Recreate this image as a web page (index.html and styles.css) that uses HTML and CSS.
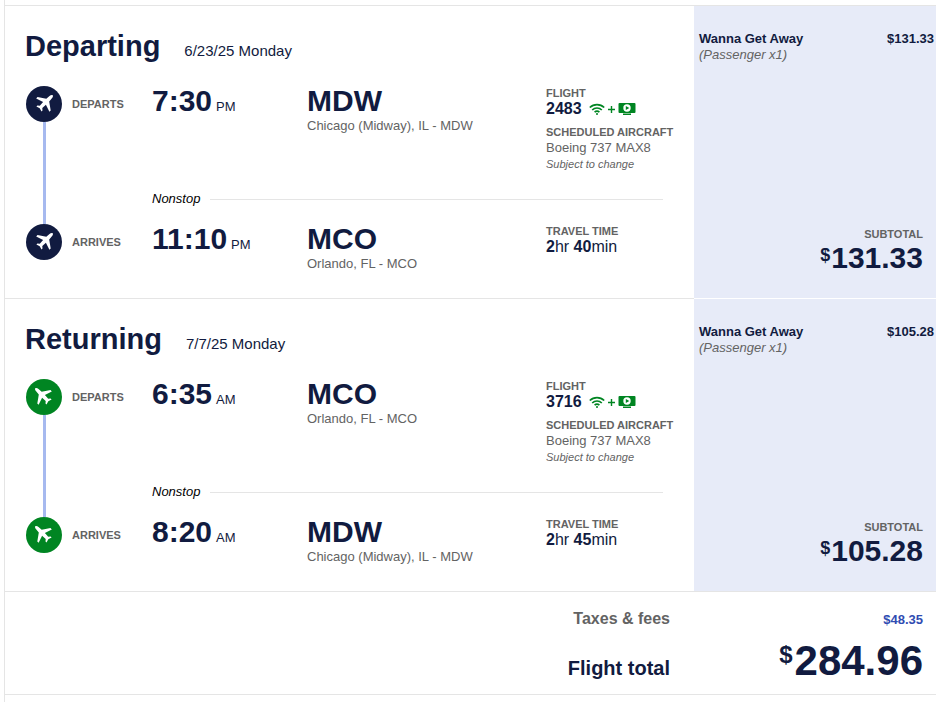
FILE: index.html
```html
<!DOCTYPE html>
<html lang="en">
<head>
<meta charset="utf-8">
<title>Flight price summary</title>
<meta name="viewport" content="width=device-width, initial-scale=1">
<link rel="stylesheet" href="styles.css">
</head>
<body>
<svg class="sprite" aria-hidden="true">
  <symbol id="plane" viewBox="0 0 36 36">
    <path d="M26.700 9.300c-.8-.6-2.200-.1-3.200.8l-3.200 2.700-8.800-1.700-1.300 1.300 6.900 3.700-3.300 3.700-2.400-.2-1 1 3.300 1.700 1.800 3.300 1-1-.2-2.500 3.600-3.400 3.500 7 1.300-1.300-1.500-8.900 2.700-3.200c.9-1 1.400-2.300.8-3z"/>
  </symbol>
  <symbol id="wifi" viewBox="0 0 16 12">
    <g fill="none" stroke="currentColor" stroke-width="1.700">
      <path d="M.8 4.500a10.300 10.300 0 0 1 14.400 0"/>
      <path d="M3.200 7a6.800 6.800 0 0 1 9.600 0"/>
      <path d="M5.600 9.200a3.500 3.500 0 0 1 4.800 0"/>
    </g>
    <circle cx="8" cy="11" r="1"/>
  </symbol>
  <symbol id="plus" viewBox="0 0 7 7">
    <path d="M2.800 0h1.400v2.800H7v1.400H4.200V7H2.800V4.200H0V2.800h2.800z"/>
  </symbol>
  <symbol id="screen" viewBox="0 0 18 12">
    <path d="M1.500 0h15a1 1 0 0 1 1 1v8a1 1 0 0 1-1 1h-15a1 1 0 0 1-1-1V1a1 1 0 0 1 1-1zM5 10.500h8V12H5z"/>
    <circle cx="9" cy="5" r="3.700" fill="#fff"/>
    <path d="M7.800 2.900v4.200L11.300 5z"/>
  </symbol>
</svg>
<main class="summary">
  <section class="trip">
    <div class="flight">
      <header class="heading"><h2>Departing</h2><span class="date">6/23/25 Monday</span></header>
      <div class="route">
        <div class="rail"><svg class="badge"><use href="#plane"/></svg></div>
        <div class="leg">
          <div class="stop">
            <span class="label">DEPARTS</span>
            <div class="time">7:30 <small>PM</small></div>
            <div class="place"><strong>MDW</strong><span>Chicago (Midway), IL - MDW</span></div>
            <div class="details">
              <div class="caption">FLIGHT</div>
              <div class="number"><b>2483</b><svg class="wifi"><use href="#wifi"/></svg><svg class="plus"><use href="#plus"/></svg><svg class="screen"><use href="#screen"/></svg></div>
              <div class="caption aircraft">SCHEDULED AIRCRAFT</div>
              <div class="model">Boeing 737 MAX8</div>
              <div class="note">Subject to change</div>
            </div>
          </div>
          <div class="nonstop">Nonstop</div>
        </div>
        <div class="rail"><svg class="badge"><use href="#plane"/></svg></div>
        <div class="leg">
          <div class="stop">
            <span class="label">ARRIVES</span>
            <div class="time">11:10 <small>PM</small></div>
            <div class="place"><strong>MCO</strong><span>Orlando, FL - MCO</span></div>
            <div class="details">
              <div class="caption">TRAVEL TIME</div>
              <div class="number"><span><b>2</b>hr <b>40</b>min</span></div>
            </div>
          </div>
        </div>
      </div>
    </div>
    <aside class="fare">
      <div class="fare-row"><b>Wanna Get Away</b><b>$131.33</b></div>
      <div class="passenger">(Passenger x1)</div>
      <div class="subtotal"><div class="caption">SUBTOTAL</div><div class="amount"><span>$</span>131.33</div></div>
    </aside>
  </section>

  <section class="trip returning">
    <div class="flight">
      <header class="heading"><h2>Returning</h2><span class="date">7/7/25 Monday</span></header>
      <div class="route">
        <div class="rail"><svg class="badge"><use href="#plane"/></svg></div>
        <div class="leg">
          <div class="stop">
            <span class="label">DEPARTS</span>
            <div class="time">6:35 <small>AM</small></div>
            <div class="place"><strong>MCO</strong><span>Orlando, FL - MCO</span></div>
            <div class="details">
              <div class="caption">FLIGHT</div>
              <div class="number"><b>3716</b><svg class="wifi"><use href="#wifi"/></svg><svg class="plus"><use href="#plus"/></svg><svg class="screen"><use href="#screen"/></svg></div>
              <div class="caption aircraft">SCHEDULED AIRCRAFT</div>
              <div class="model">Boeing 737 MAX8</div>
              <div class="note">Subject to change</div>
            </div>
          </div>
          <div class="nonstop">Nonstop</div>
        </div>
        <div class="rail"><svg class="badge"><use href="#plane"/></svg></div>
        <div class="leg">
          <div class="stop">
            <span class="label">ARRIVES</span>
            <div class="time">8:20 <small>AM</small></div>
            <div class="place"><strong>MDW</strong><span>Chicago (Midway), IL - MDW</span></div>
            <div class="details">
              <div class="caption">TRAVEL TIME</div>
              <div class="number"><span><b>2</b>hr <b>45</b>min</span></div>
            </div>
          </div>
        </div>
      </div>
    </div>
    <aside class="fare">
      <div class="fare-row"><b>Wanna Get Away</b><b>$105.28</b></div>
      <div class="passenger">(Passenger x1)</div>
      <div class="subtotal"><div class="caption">SUBTOTAL</div><div class="amount"><span>$</span>105.28</div></div>
    </aside>
  </section>

  <section class="totals">
    <div class="taxes-label">Taxes &amp; fees</div><a class="taxes" href="#">$48.35</a>
    <div class="total-label">Flight total</div><div class="amount grand"><span>$</span>284.96</div>
  </section>
</main>
</body>
</html>
```
FILE: styles.css
```css
* { box-sizing: border-box; }

body {
  margin: 0;
  background: #fff;
  color: #111b40;
  font: 13px/16px "Liberation Sans", Arial, sans-serif;
}

.sprite { position: absolute; width: 0; height: 0; }

.summary {
  min-height: 100vh;
  margin-left: 4px;
  padding-top: 5px;
  border-left: 1px solid #e5e5e5;
}

.trip {
  display: grid;
  grid-template-columns: 1fr 242px;
  border-top: 1px solid #e5e5e5;
}

.returning { border-top: 0; }
.returning .flight { border-top: 1px solid #e5e5e5; }
.returning .fare { border-top: 1px solid #fff; }

.flight { padding: 20px 31px 26px 21px; }

.heading {
  display: flex;
  align-items: baseline;
  gap: 24px;
  margin-bottom: 20px;
}

h2 { margin: 0 0 0 -1px; font-size: 29px; line-height: 40px; }
.date { font-size: 15px; }

.route {
  display: grid;
  grid-template-columns: 36px 1fr;
  grid-template-rows: 138px auto;
}

.rail { display: flex; flex-direction: column; align-items: center; }
.rail:first-child::after { content: ""; flex: 1; width: 3px; background: #a6b9ef; }

.badge {
  width: 36px;
  height: 36px;
  border-radius: 50%;
  background: #111b40;
  fill: #fff;
}
.returning .badge { background: #008522; transform: scaleX(-1); }

.leg { display: flex; flex-direction: column; justify-content: space-between; }

.stop {
  display: grid;
  grid-template-columns: 80px 155px 1fr 117px;
  padding-left: 10px;
  min-height: 48px;
  white-space: nowrap;
}

.label { color: #636363; font-size: 11px; font-weight: bold; line-height: 36px; }
.time {
  display: flex;
  align-items: baseline;
  gap: 4px;
  font-size: 30px;
  font-weight: bold;
  line-height: 30px;
}
.time small { font-size: 13px; font-weight: normal; }
.place strong { display: block; margin-bottom: 2px; font-size: 30px; line-height: 30px; }
.place span, .model { color: #636363; }

.caption { color: #636363; font-size: 11px; font-weight: bold; line-height: 14px; }
.number { display: flex; align-items: center; font-size: 16px; line-height: 18px; }
.aircraft { margin-top: 7px; }
.model { line-height: 18px; }
.note { color: #636363; font-size: 11px; font-style: italic; line-height: 14px; }

.wifi, .screen, .plus { fill: currentColor; color: #008522; }
.wifi { width: 16px; height: 12px; margin-left: 7px; }
.plus { width: 7px; height: 7px; margin: 0 3px; }
.screen { width: 18px; height: 12px; }

.nonstop {
  display: flex;
  align-items: center;
  gap: 10px;
  margin: 0 0 17px 90px;
  color: #000;
  font-style: italic;
}
.nonstop::after { content: ""; flex: 1; height: 1px; background: #e5e5e5; }

.fare {
  display: flex;
  flex-direction: column;
  padding: 25px 2px 23px 5px;
  background: #e7ebf8;
}
.fare-row { display: flex; justify-content: space-between; }
.passenger { color: #636363; font-style: italic; }
.subtotal { margin: auto 11px 0 0; text-align: right; }

.amount {
  margin: 1px 0;
  font-size: 30px;
  font-weight: bold;
  line-height: 32px;
}
.amount span {
  margin-right: 1px;
  font-size: 18px;
  line-height: 18px;
  vertical-align: 7px;
}

.totals {
  display: grid;
  grid-template-columns: 1fr 253px;
  align-items: baseline;
  row-gap: 6px;
  padding: 15px 13px 9px 0;
  border: solid #e5e5e5;
  border-width: 1px 0;
  text-align: right;
}
.taxes-label { color: #636363; font-size: 16px; font-weight: bold; line-height: 24px; }
.taxes { color: #304cb2; font-weight: bold; text-decoration: none; }
.total-label { font-size: 20px; font-weight: bold; }
.grand { margin: 0; font-size: 42px; line-height: 48px; }
.grand span { margin-right: 2px; font-size: 24px; line-height: 24px; vertical-align: 12px; }
```
